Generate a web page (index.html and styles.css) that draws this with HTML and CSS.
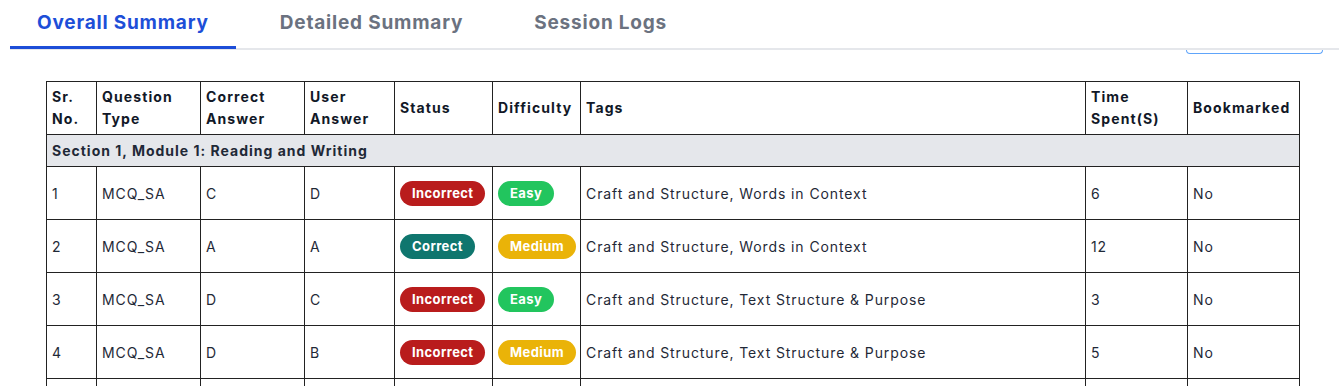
FILE: index.html
```html
<!DOCTYPE html>
<html>
<head>
<meta charset="utf-8">
<link rel="stylesheet" href="styles.css">
</head>
<body>
<div class="page">
  <div class="tabs-bar">
    <div class="tabs">
      <div class="tab active">Overall Summary</div>
      <div class="tab">Detailed Summary</div>
      <div class="tab">Session Logs</div>
    </div>
  </div>
  <div class="toolbar"><div class="btn-edge"></div></div>
  <div class="table-wrap">
    <table class="report">
      <thead>
        <tr>
          <th class="c-sr">Sr.<br>No.</th>
          <th class="c-qt">Question<br>Type</th>
          <th class="c-ca">Correct<br>Answer</th>
          <th class="c-ua">User<br>Answer</th>
          <th class="c-st">Status</th>
          <th class="c-df">Difficulty</th>
          <th class="c-tg">Tags</th>
          <th class="c-ts">Time<br>Spent(S)</th>
          <th class="c-bm">Bookmarked</th>
        </tr>
      </thead>
      <tbody>
        <tr class="section"><td colspan="9">Section 1, Module 1: Reading and Writing</td></tr>
        <tr>
          <td>1</td><td>MCQ_SA</td><td>C</td><td>D</td>
          <td><span class="badge red">Incorrect</span></td>
          <td><span class="badge green">Easy</span></td>
          <td>Craft and Structure, Words in Context</td><td>6</td><td>No</td>
        </tr>
        <tr>
          <td>2</td><td>MCQ_SA</td><td>A</td><td>A</td>
          <td><span class="badge teal">Correct</span></td>
          <td><span class="badge yellow">Medium</span></td>
          <td>Craft and Structure, Words in Context</td><td>12</td><td>No</td>
        </tr>
        <tr>
          <td>3</td><td>MCQ_SA</td><td>D</td><td>C</td>
          <td><span class="badge red">Incorrect</span></td>
          <td><span class="badge green">Easy</span></td>
          <td>Craft and Structure, Text Structure &amp; Purpose</td><td>3</td><td>No</td>
        </tr>
        <tr>
          <td>4</td><td>MCQ_SA</td><td>D</td><td>B</td>
          <td><span class="badge red">Incorrect</span></td>
          <td><span class="badge yellow">Medium</span></td>
          <td>Craft and Structure, Text Structure &amp; Purpose</td><td>5</td><td>No</td>
        </tr>
        <tr class="partial">
          <td></td><td></td><td></td><td></td><td></td><td></td><td></td><td></td><td></td>
        </tr>
      </tbody>
    </table>
  </div>
</div>
</body>
</html>
```

FILE: styles.css
```css
* { box-sizing: border-box; }
html, body { margin: 0; padding: 0; background: #fff; }
body {
  font-family: "Inter", "Noto Sans", sans-serif;
  color: #1f2937;
  overflow: hidden;
}
.page { padding: 0 10px; }
.tabs-bar {
  border-bottom: 2px solid #e5e7eb;
  margin-right: -10px;
}
.tabs { display: flex; gap: 17px; }
.tab {
  font-size: 19px;
  font-weight: 700;
  letter-spacing: 0.8px;
  color: #6b7280;
  padding: 11px 27px 11px;
  line-height: 24px;
  border-bottom: 3px solid transparent;
  margin-bottom: -1px;
}
.tab.active {
  color: #1d4ed8;
  border-bottom-color: #1d4ed8;
}
.toolbar {
  display: flex;
  justify-content: flex-end;
  padding-right: 6px;
}
.btn-edge {
  width: 137px;
  height: 4px;
  border: 1.5px solid #60a5fa;
  border-top: none;
  border-radius: 0 0 4px 4px;
}
.table-wrap { padding: 27px 31px 0 36px; }
.report {
  border-collapse: collapse;
  width: 1253px;
  table-layout: fixed;
  font-size: 14px;
  letter-spacing: 0.9px;
}
.report th, .report td {
  border: 1px solid #222;
  text-align: left;
  vertical-align: middle;
  padding: 0 5px;
}
.report th {
  height: 53px;
  font-weight: 700;
  color: #111827;
  line-height: 22px;
  letter-spacing: 1.1px;
}
.report td { height: 53px; }
.c-sr { width: 50px; }
.c-qt { width: 104px; }
.c-ca { width: 104px; }
.c-ua { width: 90px; }
.c-st { width: 98px; }
.c-df { width: 88px; }
.c-tg { width: 505px; }
.c-ts { width: 102px; }
.c-bm { width: 112px; }
.report tr.section td {
  height: 32px;
  background: #e5e7eb;
  font-weight: 700;
  color: #1f2937;
  letter-spacing: 1px;
}
.badge {
  display: inline-block;
  color: #fff;
  font-weight: 700;
  font-size: 13px;
  line-height: 17px;
  letter-spacing: 0.4px;
  padding: 4px 12px;
  border-radius: 13px;
}
.badge.red { background: #b91c1c; }
.badge.green { background: #22c55e; }
.badge.teal { background: #0f766e; }
.badge.yellow { background: #eab308; }
```
